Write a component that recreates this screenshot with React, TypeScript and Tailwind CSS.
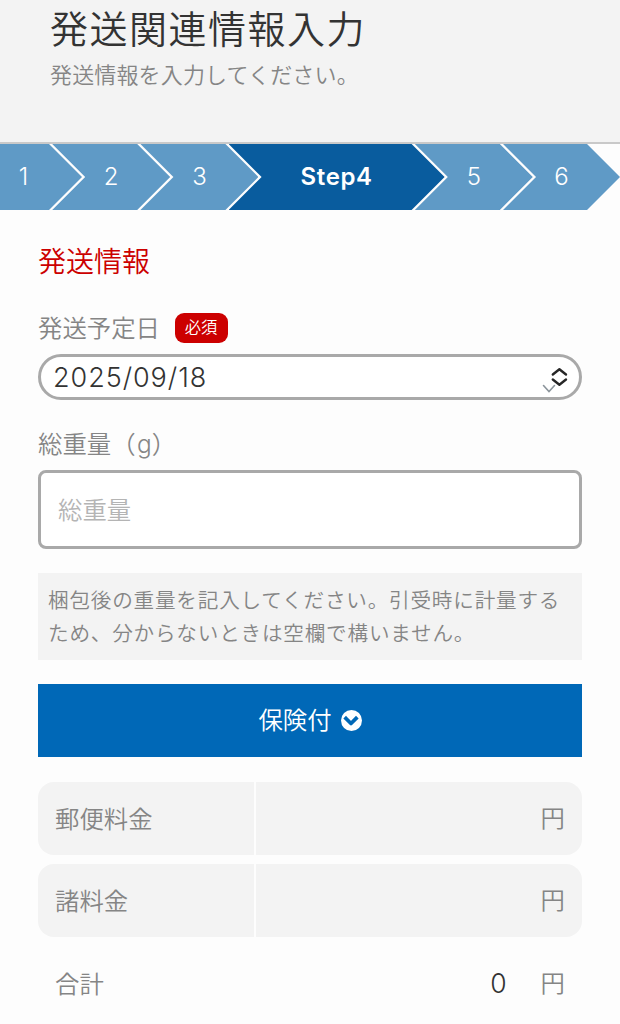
import clsx from "clsx"
import { ChevronDown } from "lucide-react"

const steps = [
  { label: "1", width: "w-[82px]" },
  { label: "2", width: "w-[118px]" },
  { label: "3", width: "w-[118px]" },
  { label: "Step4", width: "w-[216px]", active: true },
  { label: "5", width: "w-[118px]" },
  { label: "6", width: "w-[117px]" },
]

const fees = ["郵便料金", "諸料金"]

function StepBar() {
  return (
    <ol className="flex h-[66px] font-['Inter','Noto_Sans_CJK_JP',sans-serif] text-[24px] leading-none text-white">
      {steps.map((step, index) => (
        <li
          key={step.label}
          className={clsx(
            "flex shrink-0 items-center justify-center pb-px",
            step.width,
            step.active ? "bg-[#095c9e] font-semibold tracking-[0.6px]" : "bg-[#5f9ac6] font-light",
            index === 0
              ? "pr-[35px] [clip-path:polygon(0_0,calc(100%-33px)_0,100%_50%,calc(100%-33px)_100%,0_100%)]"
              : "-ml-[29.8px] [clip-path:polygon(0_0,calc(100%-33px)_0,100%_50%,calc(100%-33px)_100%,0_100%,33px_50%)]",
          )}
        >
          {step.label}
        </li>
      ))}
    </ol>
  )
}

function DateSelect() {
  return (
    <div className="relative mt-[11px] flex h-[46px] items-center rounded-full border-[3px] border-[#a9a9a9] bg-white pl-[12px]">
      <span className="font-['Inter',sans-serif] text-[27px] leading-none font-light tracking-[0.95px] text-[#333]">
        2025/09/18
      </span>
      <svg className="absolute top-[10px] right-[9px] h-[28px] w-[28px]" viewBox="0 0 28 28" fill="none" strokeLinecap="round">
        <path d="M1.5 18.5 7 24.5 12.5 18.5" stroke="#8b949b" strokeWidth="1.6" />
        <path d="M10.8 7.5 17.4 2.3 24 7.5M10.8 12.5 17.4 17.7 24 12.5" stroke="#262626" strokeWidth="2.4" strokeLinejoin="round" />
      </svg>
    </div>
  )
}

function FeeRow({ label }: { label: string }) {
  return (
    <div className="flex h-[73px] gap-[1.5px] overflow-hidden rounded-[16px] text-[24.4px]">
      <div className="flex w-[216px] items-center bg-[#f3f3f3] pl-[17px]">{label}</div>
      <div className="flex flex-1 items-center justify-end bg-[#f3f3f3] pr-[17px] pb-[2px]">円</div>
    </div>
  )
}

export default function App() {
  return (
    <div className="h-[1024px] w-[620px] overflow-hidden bg-[#fdfdfd] font-['Noto_Sans_CJK_JP',sans-serif] leading-none font-[350] text-[#858585]">
      <header className="h-[144px] border-b-2 border-[#c9c9c9] bg-[#f3f3f3] pl-[50px]">
        <h1 className="pt-[7px] text-[38px] leading-[40px] tracking-[1.5px] text-[#333]">発送関連情報入力</h1>
        <p className="mt-[14px] text-[22px] leading-[24px] tracking-[0.15px]">発送情報を入力してください。</p>
      </header>

      <StepBar />

      <main className="px-[38px]">
        <h2 className="pt-[35px] text-[28px] leading-[30px] text-[#cc0000]">発送情報</h2>

        <div className="mt-[38px] flex h-[30px] items-center gap-[15px]">
          <span className="pb-px text-[24.4px]">発送予定日</span>
          <span className="flex h-[30px] w-[53px] items-center justify-center rounded-[9px] bg-[#cc0000] pr-px pb-[3px] text-[16.3px] text-white">
            必須
          </span>
        </div>
        <DateSelect />

        <div className="mt-[29px] h-[28px] text-[24.4px] leading-[28px]">
          総重量（<span className="ml-[1.5px] font-['Inter',sans-serif] font-light">g</span>）
        </div>
        <div className="mt-[13px] flex h-[79px] items-center rounded-[8px] border-[3px] border-[#a9a9a9] bg-white pl-[17px] text-[24.4px] text-[#b4b4b4]">
          総重量
        </div>

        <p className="mt-[24px] h-[87px] bg-[#f3f3f3] pt-[10px] pl-[10px] text-[20.6px] leading-[33px] tracking-[0.8px] whitespace-nowrap">
          梱包後の重量を記入してください。引受時に計量する
          <br />
          ため、分からないときは空欄で構いません。
        </p>

        <button className="mt-[24px] flex h-[73px] w-full items-center justify-center gap-[9px] bg-[#0068b7] text-[24.4px] text-white">
          <span className="pb-[2px]">保険付</span>
          <span className="flex size-[21px] items-center justify-center rounded-full bg-white pt-px text-[#0068b7]">
            <ChevronDown className="shrink-0" size={20} strokeWidth={4.5} strokeLinecap="square" />
          </span>
        </button>

        <div className="mt-[25px] flex flex-col gap-[9px]">
          {fees.map((fee) => (
            <FeeRow key={fee} label={fee} />
          ))}
          <div className="flex h-[73px] items-center px-[17px] pt-px text-[24.4px]">
            <span className="flex-1">合計</span>
            <span className="mr-[34px] font-['Inter',sans-serif] text-[26.5px] font-light text-[#333]">0</span>
            <span className="pb-[2px]">円</span>
          </div>
        </div>
      </main>
    </div>
  )
}
